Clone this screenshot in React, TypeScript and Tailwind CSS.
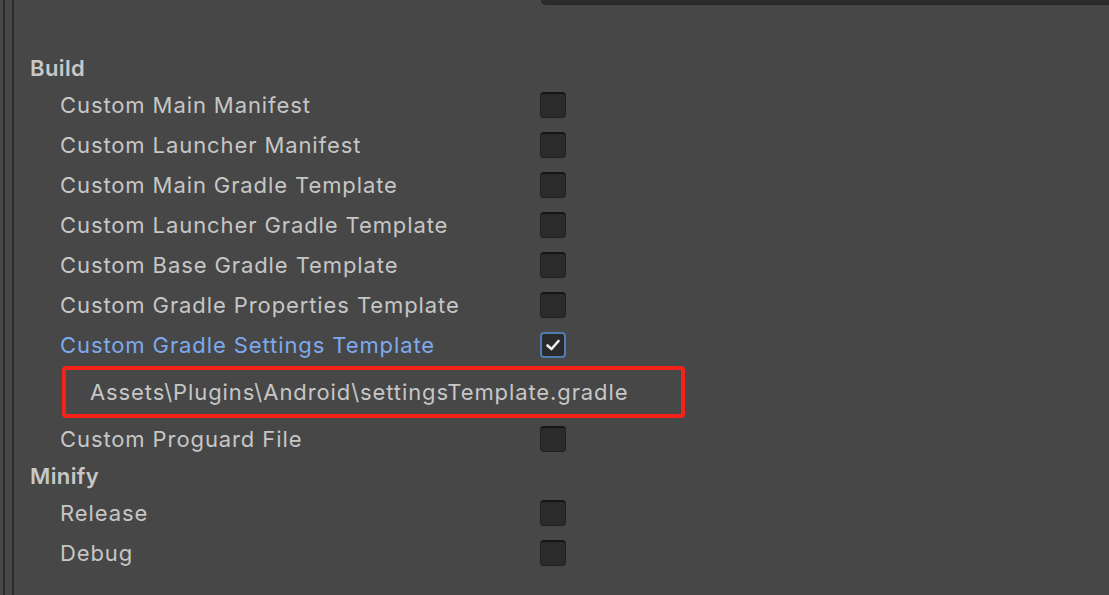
import React from "react";

function Box({ checked = false }: { checked?: boolean }) {
  if (checked) {
    return (
      <div className="w-[26px] h-[26px] rounded-[4px] bg-[#2a2a2a] border-2 border-[#4f7db3] flex items-center justify-center">
        <svg width="16" height="14" viewBox="0 0 16 14">
          <path d="M2.5 7.5 L6.5 11 L13.5 3" fill="none" stroke="#f0f0f0" strokeWidth="2.6" strokeLinecap="round" strokeLinejoin="round" />
        </svg>
      </div>
    );
  }
  return (
    <div className="w-[26px] h-[26px] rounded-[4px] bg-[#2b2b2b] border border-[#212121] border-t-[#151515] border-t-2" />
  );
}

function Row({ label, checked = false, blue = false }: { label: string; checked?: boolean; blue?: boolean }) {
  return (
    <div className="h-[40px] flex items-center">
      <div className={`w-[480px] pl-[30px] text-[22px] tracking-[0.9px] ${blue ? "text-[#7ea9ec]" : "text-[#c6c6c6]"}`}>{label}</div>
      <div className="ml-[30px]">
        <Box checked={checked} />
      </div>
    </div>
  );
}

export default function App() {
  return (
    <div
      className="w-[1109px] h-[595px] bg-[#474747] overflow-hidden flex"
      style={{ fontFamily: "Inter, 'Noto Sans', sans-serif" }}
    >
      <div className="ml-[3px] w-[2px] h-full bg-[#2c2c2c]" />
      <div className="ml-[7px] w-[2px] h-full bg-[#2c2c2c]" />
      <div className="flex-1 flex flex-col">
        <div className="ml-[527px] h-[5px] bg-[#2d2d2d] rounded-bl-[5px] border-b border-l border-[#262626]" />
        <div className="pl-[16px] pt-[46px] flex flex-col">
          <div className="h-[34px] flex items-center text-[22px] font-semibold tracking-[0.4px] text-[#c8c8c8]">Build</div>
          <Row label="Custom Main Manifest" />
          <Row label="Custom Launcher Manifest" />
          <Row label="Custom Main Gradle Template" />
          <Row label="Custom Launcher Gradle Template" />
          <Row label="Custom Base Gradle Template" />
          <Row label="Custom Gradle Properties Template" />
          <Row label="Custom Gradle Settings Template" checked blue />
          <div className="h-[54px] flex items-center">
            <div className="ml-[32px] w-[623px] h-[52px] border-[4px] border-[#f5221b] rounded-[4px] flex items-center pl-[24px] text-[22px] tracking-[0.9px] text-[#c6c6c6]">
              Assets\Plugins\Android\settingsTemplate.gradle
            </div>
          </div>
          <Row label="Custom Proguard File" />
          <div className="h-[34px] flex items-center text-[22px] font-semibold tracking-[0.4px] text-[#c8c8c8]">Minify</div>
          <Row label="Release" />
          <Row label="Debug" />
        </div>
      </div>
    </div>
  );
}
